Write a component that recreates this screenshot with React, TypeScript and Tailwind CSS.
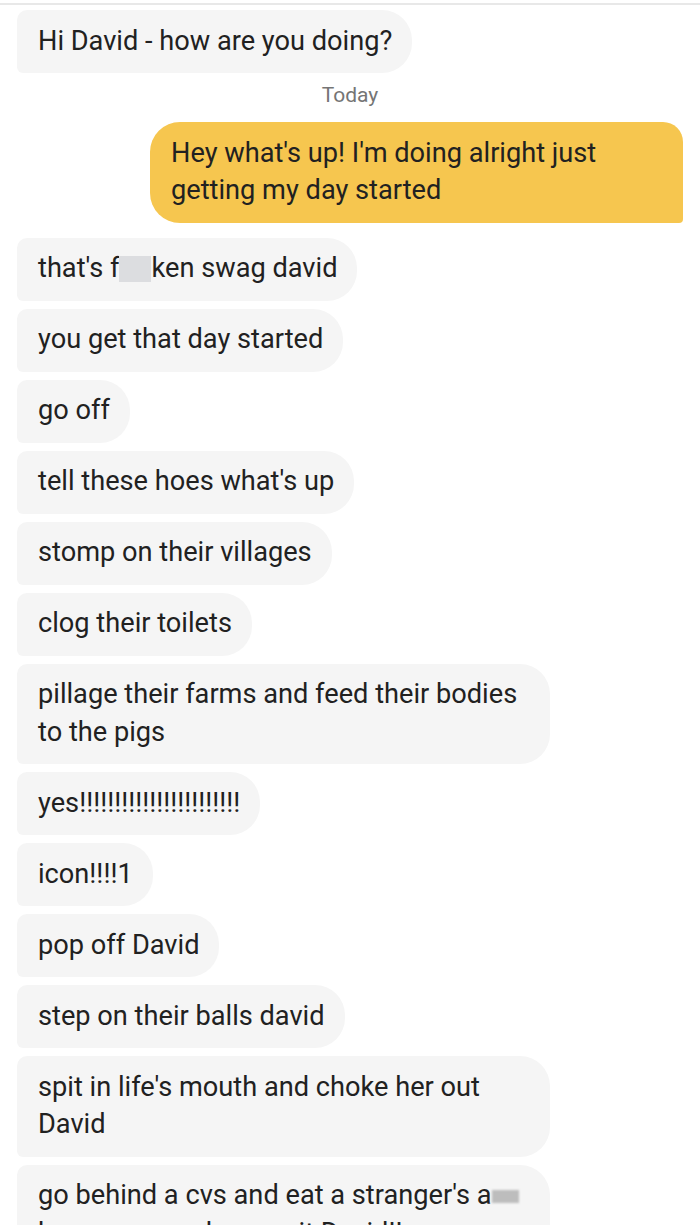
import type { ReactNode } from "react";

function Incoming({ children }: { children: ReactNode }) {
  return (
    <div className="flex">
      <div className="max-w-[533px] bg-[#f5f5f5] rounded-tl-[10px] rounded-bl-[6px] rounded-r-[30px] pl-[21px] pr-[20px] py-[12.75px] text-[27.2px] leading-[37.5px] text-[#212121]">
        {children}
      </div>
    </div>
  );
}

const messages: ReactNode[] = [
  <>
    that's f
    <span className="inline-block w-[32px] h-[26px] bg-[#dcdde0] align-[-5px]" />
    ken swag david
  </>,
  "you get that day started",
  "go off",
  "tell these hoes what's up",
  "stomp on their villages",
  "clog their toilets",
  "pillage their farms and feed their bodies to the pigs",
  "yes!!!!!!!!!!!!!!!!!!!!!!!",
  "icon!!!!1",
  "pop off David",
  "step on their balls david",
  "spit in life's mouth and choke her out David",
  <>
    go behind a cvs and eat a stranger's a
    <span className="inline-block w-[27px] h-[13px] bg-[#bdbdbd] blur-[1px] align-[1px]" />{" "}
    because you deserve it David!!
  </>,
];

export default function App() {
  return (
    <div className="w-[700px] h-[1225px] overflow-hidden bg-white font-['Roboto',sans-serif] pt-[3px]">
      <div className="h-[2px] bg-[#e8e8e8]" />
      <div className="px-[17px] pt-[5px]">
        <Incoming>Hi David - how are you doing?</Incoming>
        <div className="mt-[8px] mb-[13px] text-center text-[21px] leading-[28px] text-[#757575]">
          Today
        </div>
        <div className="flex justify-end">
          <div className="max-w-[533px] bg-[#f6c64f] rounded-l-[30px] rounded-tr-[20px] rounded-br-[4px] pl-[21px] pr-[20px] py-[12.75px] text-[27.2px] leading-[37.5px] text-[#212121]">
            Hey what's up! I'm doing alright just getting my day started
          </div>
        </div>
        <div className="mt-[15px] flex flex-col gap-[8px]">
          {messages.map((m, i) => (
            <Incoming key={i}>{m}</Incoming>
          ))}
        </div>
      </div>
    </div>
  );
}
